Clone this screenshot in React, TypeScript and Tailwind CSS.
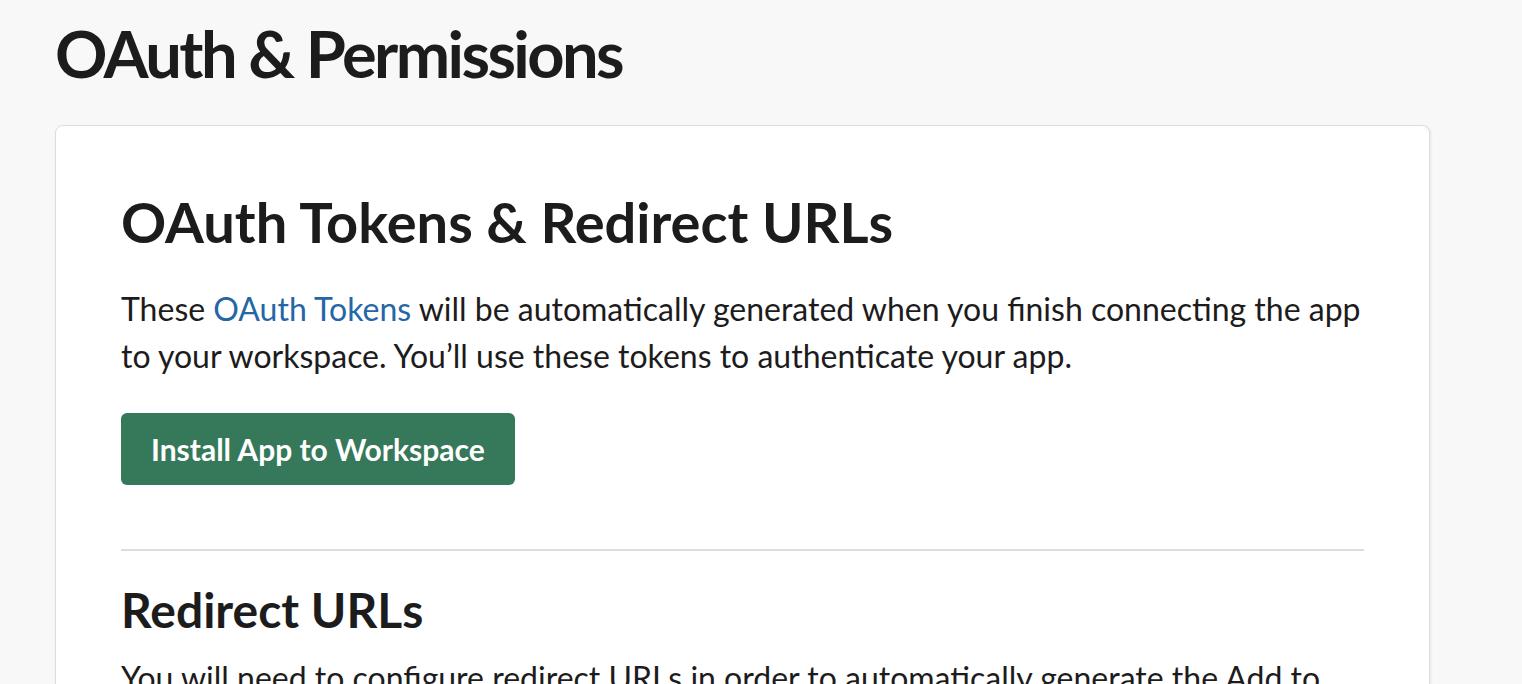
export default function App() {
  return (
    <div className="min-h-screen bg-[#f8f8f8] pl-[55px] pt-[14px] font-['Lato',sans-serif] text-[#1d1c1d]">
      <h1 className="text-[65px] font-bold leading-[1.2] tracking-[-2.6px]">OAuth &amp; Permissions</h1>
      <div className="mt-[33px] w-[1375px] rounded-lg border border-[#dddddd] bg-white px-[65px] pt-[62px] shadow-[1px_1px_3px_rgba(0,0,0,0.08)]">
        <h2 className="text-[56px] font-bold leading-[1.2]">OAuth Tokens &amp; Redirect URLs</h2>
        <p className="mt-[30px] text-[32px] leading-[47px]">
          These <a className="text-[#2466a6]">OAuth Tokens</a> will be automatically generated when you finish connecting the app to your workspace. You’ll use these tokens to authenticate your app.
        </p>
        <button className="mt-[34px] h-[72px] rounded-md bg-[#35795a] px-[30px] text-[30px] font-bold text-white">
          Install App to Workspace
        </button>
        <div className="mt-[64px] h-[2px] bg-[#dddddd]" />
        <h3 className="mt-[30px] text-[48px] font-bold leading-[1.2]">Redirect URLs</h3>
        <p className="mt-[15px] text-[32px] leading-[47px]">
          You will need to configure redirect URLs in order to automatically generate the Add to Slack button or to distribute your app.
        </p>
      </div>
    </div>
  );
}
